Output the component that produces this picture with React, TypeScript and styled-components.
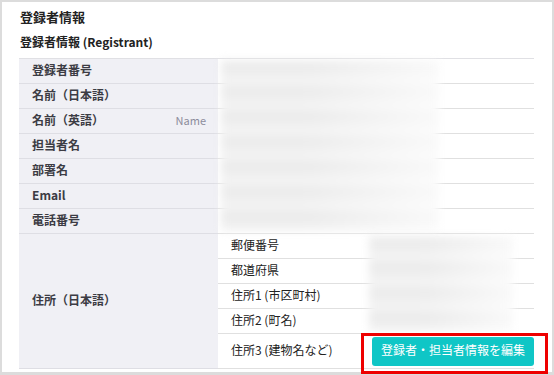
import React from "react";
import styled, { createGlobalStyle } from "styled-components";

const GlobalStyle = createGlobalStyle`
  html, body {
    margin: 0;
    padding: 0;
    background: #ffffff;
  }
  body {
    font-family: "Noto Sans CJK JP", "Noto Sans", sans-serif;
    color: #222;
  }
`;

const Frame = styled.div`
  position: relative;
  box-sizing: border-box;
  width: 554px;
  height: 375px;
  border: 2px solid #dcdcdc;
  border-bottom-width: 3px;
  padding: 7px 18px 0 17px;
  background: #fff;
`;

const Title = styled.h1`
  margin: 0 0 0 1px;
  font-size: 13px;
  line-height: 16px;
  font-weight: 700;
  color: #222;
`;

const SubTitle = styled.h2`
  margin: 9px 0 0 1px;
  font-size: 12px;
  line-height: 16px;
  font-weight: 700;
  color: #222;
`;

const Table = styled.div`
  position: relative;
  margin-top: 8px;
  border-top: 1px solid #e0e0e4;
  display: grid;
  grid-template-columns: 199px 1fr;
`;

const LabelCell = styled.div<{ $tall?: boolean }>`
  box-sizing: border-box;
  height: ${({ $tall }) => ($tall ? "135px" : "25px")};
  display: flex;
  align-items: center;
  justify-content: space-between;
  padding: 0 12px 2px 13px;
  background: #f0f0f5;
  border-bottom: 1px solid #dedee4;
  font-size: 12px;
  line-height: 14px;
  font-weight: 700;
  color: #3c3c44;
`;

const Hint = styled.span`
  font-size: 11px;
  font-weight: 400;
  color: #8c8c9c;
`;

const ValueCell = styled.div`
  box-sizing: border-box;
  height: 25px;
  border-bottom: 1px solid #e0e0e0;
`;

const SubTable = styled.div`
  display: grid;
  grid-template-columns: 144px 1fr;
`;

const SubLabel = styled.div<{ $tall?: boolean }>`
  box-sizing: border-box;
  height: ${({ $tall }) => ($tall ? "35px" : "25px")};
  display: flex;
  align-items: center;
  padding: 0 0 2px 13px;
  border-bottom: 1px solid #e0e0e0;
  font-size: 12px;
  line-height: 14px;
  color: #222;
  white-space: nowrap;
`;

const SubValue = styled.div<{ $tall?: boolean }>`
  box-sizing: border-box;
  height: ${({ $tall }) => ($tall ? "35px" : "25px")};
  display: flex;
  align-items: center;
  padding-left: 10px;
  border-bottom: 1px solid #e0e0e0;
`;

const EditButton = styled.button`
  box-sizing: border-box;
  width: 162px;
  height: 29px;
  padding: 0 0 2px;
  border: none;
  border-radius: 3px;
  background: #0fc6c6;
  color: #fff;
  font-family: "Noto Sans CJK JP", "Noto Sans", sans-serif;
  font-size: 12px;
  line-height: 14px;
  cursor: pointer;
`;

const Redacted = styled.div<{ $left: number; $top: number; $w: number; $h: number }>`
  position: absolute;
  left: ${({ $left }) => $left}px;
  top: ${({ $top }) => $top}px;
  width: ${({ $w }) => $w}px;
  height: ${({ $h }) => $h}px;
  background:
    linear-gradient(to right, rgba(255,255,255,0) 40%, rgba(255,255,255,0.7) 100%),
    repeating-linear-gradient(to bottom, #e9e9e9 0px, #efefef 12px, #f6f6f6 25px);
  filter: blur(4px);
`;

const Highlight = styled.div`
  position: absolute;
  left: 359px;
  top: 331px;
  width: 187px;
  height: 41px;
  box-sizing: border-box;
  border: 3px solid #ee0000;
  pointer-events: none;
`;

const rows: { label: string; hint?: string }[] = [
  { label: "登録者番号" },
  { label: "名前（日本語）" },
  { label: "名前（英語）", hint: "Name" },
  { label: "担当者名" },
  { label: "部署名" },
  { label: "Email" },
  { label: "電話番号" },
];

const address = ["郵便番号", "都道府県", "住所1 (市区町村)", "住所2 (町名)"];

export default function App() {
  return (
    <>
      <GlobalStyle />
      <Frame>
        <Title>登録者情報</Title>
        <SubTitle>登録者情報 (Registrant)</SubTitle>
        <Table>
          {rows.map((r) => (
            <React.Fragment key={r.label}>
              <LabelCell>
                <span>{r.label}</span>
                {r.hint && <Hint>{r.hint}</Hint>}
              </LabelCell>
              <ValueCell />
            </React.Fragment>
          ))}
          <LabelCell $tall>
            <span>住所（日本語）</span>
          </LabelCell>
          <SubTable>
            {address.map((a) => (
              <React.Fragment key={a}>
                <SubLabel>{a}</SubLabel>
                <SubValue />
              </React.Fragment>
            ))}
            <SubLabel $tall>住所3 (建物名など)</SubLabel>
            <SubValue $tall>
              <EditButton>登録者・担当者情報を編集</EditButton>
            </SubValue>
          </SubTable>
          <Redacted $left={202} $top={2} $w={218} $h={170} />
          <Redacted $left={350} $top={178} $w={144} $h={94} />
        </Table>
        <Highlight />
      </Frame>
    </>
  );
}
